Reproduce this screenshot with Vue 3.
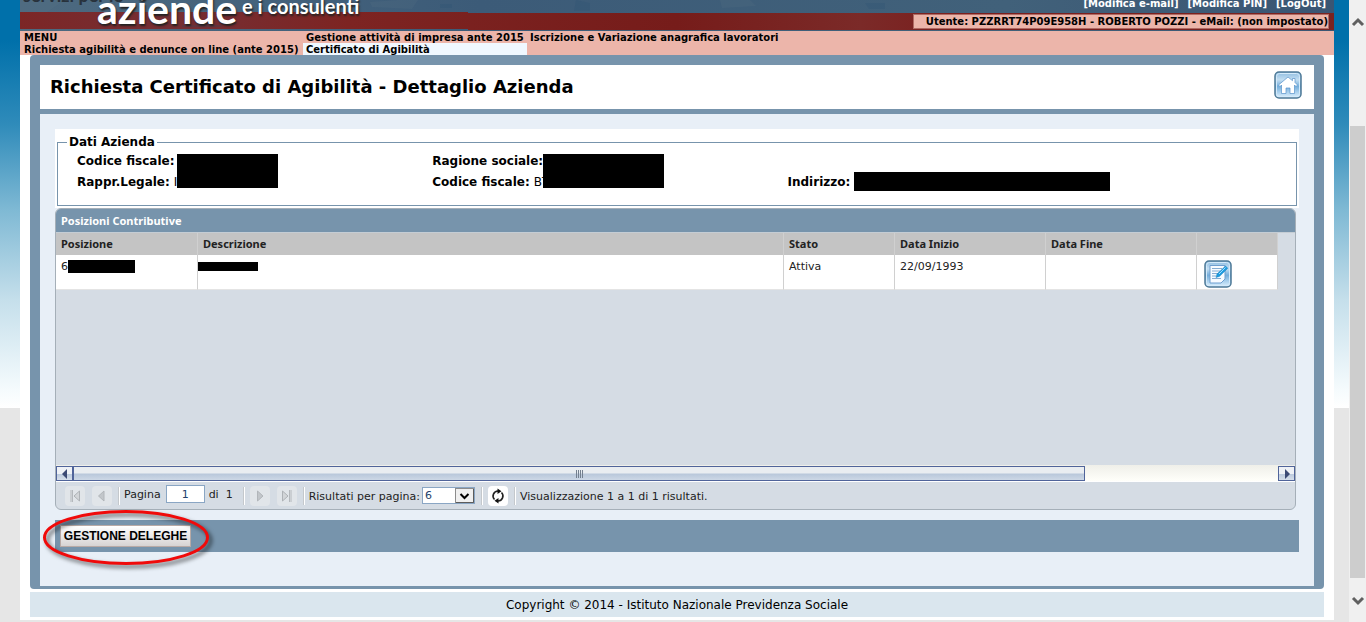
<script setup>
import { ref } from 'vue'

const pagina = ref('1')
const perPagina = ref('6')

const righe = [{ posizione: '6', stato: 'Attiva', inizio: '22/09/1993', fine: '' }]
</script>

<template>
  <div class="window">
    <div class="backdrop">
      <div class="page">
        <header class="banner">
          <svg class="scene" preserveAspectRatio="none" viewBox="0 0 1314 31" aria-hidden="true">
            <defs>
              <linearGradient id="sky" x1="0" x2="1" y1="0" y2="0">
                <stop offset="0" stop-color="#4d6a80" />
                <stop offset="0.35" stop-color="#3c5b78" />
                <stop offset="0.75" stop-color="#41617a" />
                <stop offset="1" stop-color="#3a5573" />
              </linearGradient>
              <linearGradient id="band" x1="0" x2="1" y1="0" y2="0">
                <stop offset="0" stop-color="#7c2626" />
                <stop offset="0.12" stop-color="#752f35" />
                <stop offset="0.25" stop-color="#7d2422" />
                <stop offset="0.5" stop-color="#761c1a" />
                <stop offset="0.64" stop-color="#7b2a28" />
                <stop offset="0.72" stop-color="#7a1d1c" />
                <stop offset="1" stop-color="#7a2220" />
              </linearGradient>
            </defs>
            <rect width="1314" height="31" fill="url(#sky)" />
            <path d="M0 0h45l-18 12H0zM350 2l28-2h20l-6 9-40-2zM700 0h30l6 6-34 2z" fill="#5a7488" opacity=".2" />
            <path d="M420 4h12v4h-12zM556 0l14 3v8h-16zM845 3h20v6h-16z" fill="#2f5273" opacity=".3" />
            <path d="M0 12h448v1h866v17H448v-1H0z" fill="url(#band)" />
            <path d="M162 26h40" stroke="#3c4257" opacity=".7" />
          </svg>
          <div class="brand">
            <span class="brand-top">servizi per le</span>
            <span class="brand-main">aziende</span>
            <span class="brand-tail">e i consulenti</span>
          </div>
          <div class="session">
            <nav class="session-links">
              <a href="#">[Modifica e-mail]</a>
              <a href="#">[Modifica PIN]</a>
              <a href="#">[LogOut]</a>
            </nav>
            <div class="user">Utente: PZZRRT74P09E958H - ROBERTO POZZI - eMail: (non impostato)</div>
          </div>
        </header>

        <nav class="menu">
          <div class="menu-col first">
            <a href="#">MENU</a>
            <a href="#">Richiesta agibilità e denunce on line (ante 2015)</a>
          </div>
          <div class="menu-col second">
            <a href="#">Gestione attività di impresa ante 2015</a>
            <a href="#" class="current">Certificato di Agibilità</a>
          </div>
          <div class="menu-col">
            <a href="#">Iscrizione e Variazione anagrafica lavoratori</a>
          </div>
        </nav>

        <main class="panel">
          <div class="title">
            <h1>Richiesta Certificato di Agibilità - Dettaglio Azienda</h1>
            <button class="tile" type="button" aria-label="Home">
              <svg width="28" height="28" viewBox="0 0 28 28">
                <defs>
                  <linearGradient id="tile" x1="0" x2="0" y1="0" y2="1">
                    <stop offset="0" stop-color="#8dbce0" />
                    <stop offset="0.3" stop-color="#c3def2" />
                    <stop offset="0.55" stop-color="#74aedb" />
                    <stop offset="1" stop-color="#dff2ff" />
                  </linearGradient>
                </defs>
                <rect x="1" y="1" width="26" height="26" rx="4" fill="url(#tile)" stroke="#4c7896" stroke-width="1.5" />
                <rect x="2.5" y="2.5" width="23" height="23" rx="3" fill="none" stroke="#d4eafa" />
                <path d="M14 6 4.5 14l1.5 1.5L7.500 14v8.500H12V17h4v5.500h4.500V14l1.500 1.500 1.500-1.500L21 11.500V7.500h-2.500v2.200z" fill="#fff" stroke="#5994cb" stroke-width=".7" />
              </svg>
            </button>
          </div>

          <div class="content">
            <div class="company">
              <fieldset>
                <legend>Dati Azienda</legend>
                <dl>
                  <div class="group">
                    <div><dt>Codice fiscale:</dt><dd></dd></div>
                    <div><dt>Rappr.Legale:</dt><dd>I</dd></div>
                    <span class="mask mask-a"></span>
                  </div>
                  <div class="group">
                    <div><dt>Ragione sociale:</dt><dd></dd></div>
                    <div><dt>Codice fiscale:</dt><dd>BT</dd></div>
                    <span class="mask mask-b"></span>
                  </div>
                  <div class="group last">
                    <div><dt>Indirizzo:</dt><dd class="bar"></dd></div>
                  </div>
                </dl>
              </fieldset>
            </div>

            <section class="grid">
              <h2>Posizioni Contributive</h2>
              <div class="grid-body">
                <table>
                  <colgroup>
                    <col class="c-pos" /><col /><col class="c-stato" /><col class="c-data" /><col class="c-data" /><col class="c-act" />
                  </colgroup>
                  <thead>
                    <tr>
                      <th>Posizione</th><th>Descrizione</th><th>Stato</th><th>Data Inizio</th><th>Data Fine</th><th></th>
                    </tr>
                  </thead>
                  <tbody>
                    <tr v-for="r in righe" :key="r.posizione">
                      <td><div class="code">{{ r.posizione }}<span class="hide-code"></span></div></td>
                      <td class="desc"><span class="hide-desc"></span></td>
                      <td>{{ r.stato }}</td>
                      <td>{{ r.inizio }}</td>
                      <td>{{ r.fine }}</td>
                      <td class="act">
                        <button class="tile" type="button" aria-label="Modifica">
                          <svg width="28" height="28" viewBox="0 0 28 28">
                            <rect x="1" y="1" width="26" height="26" rx="4" fill="url(#tile)" stroke="#4c7896" stroke-width="1.5" />
                            <rect x="2.5" y="2.5" width="23" height="23" rx="3" fill="none" stroke="#d4eafa" />
                            <path d="M6 5.5h15v13.500L17 23H6z" fill="#f7fbff" stroke="#6f9fd0" />
                            <path d="M8 8.500h10M8 11h8M8 13.500h6M8 16h4M8 18.500h9" stroke="#85acd2" />
                            <path d="m12 17.500 1-3.500L21.500 6l2.300 2.300-8.400 8.100z" fill="#1c9be0" stroke="#1a80bb" stroke-width=".5" />
                            <path d="m15 14 6.500-6.500" stroke="#9bdcff" />
                          </svg>
                        </button>
                      </td>
                    </tr>
                  </tbody>
                </table>
              </div>
              <div class="hscroll">
                <button class="hs-btn" type="button" aria-label="Scorri a sinistra">
                  <svg width="8" height="10" viewBox="0 0 8 10"><path d="M6 0v10L1 5z" fill="#3c4a75" /></svg>
                </button>
                <div class="hs-track">
                  <div class="hs-thumb"><i></i><i></i><i></i><i></i></div>
                </div>
                <button class="hs-btn" type="button" aria-label="Scorri a destra">
                  <svg width="8" height="10" viewBox="0 0 8 10"><path d="M2 0v10l5-5z" fill="#3c4a75" /></svg>
                </button>
              </div>
              <div class="pager">
                <button class="pg" type="button" aria-label="Prima pagina">
                  <svg width="20" height="20" viewBox="0 0 20 20"><path d="M6 4v12M7.500 4v12" stroke="#b4b8bc" /><path d="M14.500 5v10l-5.500-5z" fill="#d2d5d8" stroke="#aeb2b6" /></svg>
                </button>
                <button class="pg" type="button" aria-label="Pagina precedente">
                  <svg width="20" height="20" viewBox="0 0 20 20"><path d="M12 5v10l-5.500-5z" fill="#c2c6ca" stroke="#b2b6ba" /></svg>
                </button>
                <span class="sep"></span>
                <label class="lift" for="pagina">Pagina</label>
                <input id="pagina" v-model="pagina" class="lift" type="text" />
                <span class="lift total">di&nbsp; 1</span>
                <span class="sep"></span>
                <button class="pg" type="button" aria-label="Pagina successiva">
                  <svg width="20" height="20" viewBox="0 0 20 20"><path d="M7.500 5v10l5.500-5z" fill="#c2c6ca" stroke="#b2b6ba" /></svg>
                </button>
                <button class="pg" type="button" aria-label="Ultima pagina">
                  <svg width="20" height="20" viewBox="0 0 20 20"><path d="M12.500 4v12M14 4v12" stroke="#b4b8bc" /><path d="M5.500 5v10l5.500-5z" fill="#d2d5d8" stroke="#aeb2b6" /></svg>
                </button>
                <span class="sep"></span>
                <label class="text" for="risultati">Risultati per pagina:</label>
                <span class="pick">
                  <select id="risultati" v-model="perPagina">
                    <option>6</option>
                    <option>12</option>
                    <option>24</option>
                  </select>
                  <svg width="19" height="15" viewBox="0 0 19 15" aria-hidden="true">
                    <rect x=".5" y=".5" width="18" height="14" fill="#f0f0f0" stroke="#8c8c8c" />
                    <path d="M1 14.500h17.500V1" fill="none" stroke="#5c5c5c" />
                    <path d="m5.500 6 4 4 4-4" fill="none" stroke="#000" stroke-width="2" />
                  </svg>
                </span>
                <span class="sep"></span>
                <button class="pg refresh" type="button" aria-label="Aggiorna">
                  <svg width="20" height="20" viewBox="0 0 20 20">
                    <path d="M6.500 13.500A5 5 0 0 1 10 5M13.500 6.500A5 5 0 0 1 10 15" fill="none" stroke="#222" stroke-width="1.600" />
                    <path d="m9.500 2.500 4 2.700-4 2.800zM10.500 12v5.500l-4-2.700z" fill="#111" />
                  </svg>
                </button>
                <span class="sep"></span>
                <span class="text">Visualizzazione 1 a 1 di 1 risultati.</span>
              </div>
            </section>

            <div class="actions">
              <button class="delegate" type="button">GESTIONE DELEGHE</button>
              <svg class="highlight" width="180" height="70" viewBox="0 0 180 70" aria-hidden="true">
                <ellipse cx="86" cy="33.500" rx="81.500" ry="26" fill="none" stroke="#f00a0a" stroke-width="3" />
              </svg>
            </div>
          </div>
        </main>

        <footer>Copyright © 2014 - Istituto Nazionale Previdenza Sociale</footer>
      </div>
    </div>

    <div class="vscroll" aria-hidden="true">
      <svg width="16" height="42" viewBox="0 0 16 42"><path d="m3 25 5-5 5 5" fill="none" stroke="#606060" stroke-width="3" /></svg>
      <div class="vthumb"></div>
      <svg width="16" height="44" viewBox="0 0 16 44"><path d="m3 20 5 5 5-5" fill="none" stroke="#606060" stroke-width="3" /></svg>
    </div>
  </div>
</template>

<style>
body {
  margin: 0;
  background: #e6e6e6;
}
</style>

<style scoped>
.window {
  display: flex;
  min-height: 100vh;
  font-family: "DejaVu Sans", Verdana, sans-serif;
  color: #000;
}
.window *,
.window *::before {
  box-sizing: border-box;
}
button {
  padding: 0;
  font-family: inherit;
}
svg {
  display: block;
}
.backdrop {
  flex: 1;
  min-width: 0;
  padding: 0 15px 0 20px;
  background: linear-gradient(#0070aa 0, #0070aa 40px, #2f8bba 124px, #7fb9d4 210px, #c5dfeb 300px, #f5fbfd 390px, #fff 408px) no-repeat 0 0 / 100% 408px #e6e6e6;
}
.page {
  background: #fff;
  padding-bottom: 3px;
}

/* banner */
.banner {
  position: relative;
  display: flex;
  justify-content: space-between;
  align-items: flex-end;
  height: 31px;
  overflow: hidden;
  background: #3c5b78;
}
.scene {
  position: absolute;
  inset: 0;
  width: 100%;
  height: 100%;
}
.brand {
  position: relative;
  height: 60px;
  width: 400px;
  font-family: Lato, sans-serif;
  font-weight: 700;
  color: #fff;
  text-shadow: 1px 2px 2px #222;
}
.brand span {
  position: absolute;
  white-space: nowrap;
}
.brand-top {
  left: 3px;
  top: 12px;
  font-size: 18px;
  line-height: 24px;
  color: #28323c;
  text-shadow: none;
}
.brand-main {
  left: 77px;
  top: 14px;
  font-size: 41px;
  line-height: 48px;
}
.brand-tail {
  left: 222px;
  top: 23px;
  font-size: 20px;
  line-height: 24px;
}
.session {
  position: relative;
  display: flex;
  flex-direction: column;
  align-items: flex-end;
  padding: 0 5px 2px 0;
  font-size: 10px;
  font-weight: 700;
}
.session-links {
  display: flex;
  gap: 9px;
  line-height: 14px;
  margin: 0 3px 3px 0;
}
.session-links a {
  color: #fff;
  text-decoration: none;
}
.user {
  background: #ecb5aa;
  border: 1px solid #b06a63;
  padding: 1px 0 0 12px;
  line-height: 12px;
  white-space: nowrap;
}

/* menu */
.menu {
  display: flex;
  height: 24px;
  background: #ecb5aa;
  font-size: 10px;
  font-weight: 700;
  line-height: 12px;
}
.menu a {
  display: block;
  height: 12px;
  padding: 1px 3px 0;
  color: #000;
  text-decoration: none;
  white-space: nowrap;
}
.menu-col.first {
  width: 283px;
}
.menu-col.first a {
  padding-left: 4px;
}
.menu-col.second {
  width: 224px;
}
.menu .current {
  background: #f0f8ff;
}

/* panel */
.panel {
  margin: 0 10px;
  padding: 10px 10px 3px;
  background: #7794ac;
  border-radius: 4px;
}
.title {
  display: flex;
  align-items: center;
  justify-content: space-between;
  height: 44px;
  padding: 0 12px 4px 10px;
  margin-bottom: 5px;
  background: #fff;
}
h1 {
  margin: 0;
  padding-top: 4px;
  font-size: 18px;
  line-height: 24px;
  font-weight: 700;
}
.tile {
  display: block;
  border: 0;
  background: none;
}
.content {
  padding: 15px 15px 34px;
  background: #e8eff7;
}
.company {
  padding: 5px 2px 2px;
  background: #fff;
}
fieldset {
  margin: 0;
  padding: 0 1px 12px 19px;
  border: 1px solid #7794ac;
  font-size: 12px;
}
legend {
  margin-left: -10px;
  padding: 0 2px;
  line-height: 17px;
  font-weight: 700;
}
dl {
  display: grid;
  grid-template-columns: 7fr 7fr 10fr;
  margin: 0;
}
.group {
  position: relative;
  line-height: 21px;
}
.group > div {
  display: flex;
  gap: 4px;
  height: 21px;
}
.group.last {
  display: flex;
  align-items: flex-end;
}
dt {
  font-weight: 700;
}
dd {
  margin: 0;
}
dd.bar {
  width: 256px;
  height: 19px;
  background: #000;
}
.mask {
  position: absolute;
  top: 3px;
  height: 34px;
  background: #000;
}
.mask-a {
  left: 100px;
  width: 101px;
}
.mask-b {
  left: 111px;
  width: 121px;
}

/* grid */
.grid {
  margin-right: 3px;
  border: 1px solid #a5afb8;
  border-radius: 6px;
  background: #d5dce4;
  overflow: hidden;
  font-size: 11px;
  color: #222;
}
h2 {
  margin: 0;
  padding: 1px 5px 0;
  font-family: "Noto Sans", Tahoma, sans-serif;
  font-size: 11px;
  line-height: 22px;
  font-weight: 700;
  color: #fff;
  background: #7794ac;
}
.grid-body {
  min-height: 233px;
  padding-right: 17px;
  border-top: 1px solid #c5cdd4;
}
table {
  width: 100%;
  table-layout: fixed;
  border-collapse: separate;
  border-spacing: 0;
}
.c-pos {
  width: 142px;
}
.c-stato {
  width: 111px;
}
.c-data {
  width: 151px;
}
.c-act {
  width: 81px;
}
th,
td {
  padding: 0 5px;
  text-align: left;
  vertical-align: top;
  border-right: 1px solid #d0d0d0;
}
th {
  height: 22px;
  line-height: 22px;
  font-family: "Noto Sans", Tahoma, sans-serif;
  background: #c4c4c4;
}
td {
  height: 35px;
  padding-top: 5px;
  line-height: 14px;
  background: #fff;
  border-bottom: 1px solid #e4e4e4;
}
.code {
  display: flex;
}
.hide-code {
  width: 67px;
  height: 13px;
  background: #000;
}
td.desc {
  padding: 7px 0 0;
}
.hide-desc {
  display: block;
  width: 60px;
  height: 9px;
  background: #000;
}
td.act {
  padding: 5px 7px 0;
}

.hscroll {
  display: flex;
  align-items: flex-end;
  height: 16px;
  background: linear-gradient(#efefe9, #fffffa);
}
.hs-btn {
  display: flex;
  align-items: center;
  justify-content: center;
  width: 17px;
  height: 15px;
  border: 1px solid #50649a;
  background: linear-gradient(#eef1f6 50%, #b9c8dc 50%, #d6dfeb);
}
.hs-track {
  flex: 1;
}
.hs-thumb {
  display: flex;
  align-items: center;
  justify-content: center;
  gap: 1px;
  width: 84%;
  height: 15px;
  border: 1px solid #50649a;
  background: linear-gradient(#e9edf1 45%, #b9c8db 55%, #cdd8e6);
}
.hs-thumb i {
  width: 1px;
  height: 8px;
  background: #74808f;
}

.pager {
  display: flex;
  align-items: center;
  height: 28px;
  padding: 0 9px;
  border-top: 1px solid #fff;
  white-space: nowrap;
}
.pg {
  width: 20px;
  height: 20px;
  border: 0;
  border-radius: 4px;
  background: #e1e5e9;
}
.pg + .pg {
  margin-left: 7px;
}
.pg.refresh {
  background: #fff;
}
.sep {
  width: 2px;
  height: 18px;
  margin: 0 5px;
  border-left: 1px solid #c4c8cc;
  border-right: 1px solid #fff;
}
.pg + .sep {
  margin-left: 6px;
  margin-right: 4px;
}
.text {
  padding-top: 1px;
}
.lift {
  margin-bottom: 3px;
}
#pagina {
  width: 39px;
  height: 18px;
  margin-left: 5px;
  margin-right: 4px;
  padding: 0;
  border: 1px solid #8aa6c4;
  font: 11px "DejaVu Sans", Verdana, sans-serif;
  color: #24426b;
  text-align: center;
}
.total {
  margin-right: 5px;
}
.pick {
  position: relative;
  margin: 0 1px 0 2px;
}
.pick select {
  display: block;
  width: 53px;
  height: 17px;
  padding: 0 2px;
  border: 1px solid #8aa6c4;
  border-radius: 0;
  background: #fff;
  appearance: none;
  font: 11px "DejaVu Sans", Verdana, sans-serif;
  color: #24426b;
}
.pick svg {
  position: absolute;
  top: 1px;
  right: 1px;
  pointer-events: none;
}

/* actions */
.actions {
  position: relative;
  display: flex;
  align-items: center;
  height: 32px;
  margin-top: 10px;
  padding: 0 5px;
  background: #7794ac;
}
.delegate {
  width: 131px;
  height: 22px;
  border: 1px solid #b8aaa6;
  background: linear-gradient(#fff, #d6d3d3);
  font-family: "Liberation Sans", Arial, sans-serif;
  font-size: 12px;
  font-weight: 700;
  color: #000;
}
.highlight {
  position: absolute;
  left: -15px;
  top: -16px;
  pointer-events: none;
  filter: drop-shadow(3px 3px 2px rgba(0, 0, 0, 0.6));
}

footer {
  margin: 3px 10px 0;
  padding-top: 1px;
  background: #dae6ee;
  font-size: 12px;
  line-height: 24px;
  text-align: center;
}

/* window scroll bar */
.vscroll {
  display: flex;
  flex-direction: column;
  width: 17px;
  padding: 0 0 0 1px;
  background: #f0f0f0;
}
.vscroll svg {
  flex: none;
}
.vthumb {
  flex: 1;
  width: 15px;
  margin-top: 84px;
  background: #cdcdcd;
}
</style>
